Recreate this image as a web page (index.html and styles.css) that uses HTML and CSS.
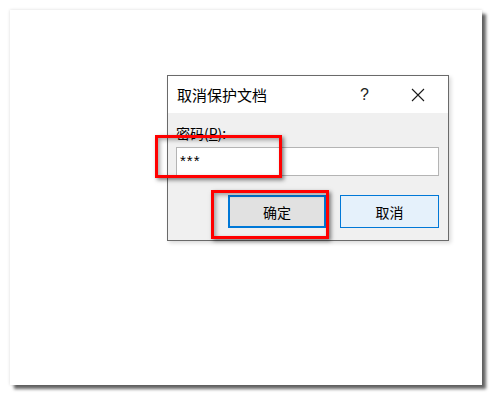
FILE: index.html
```html
<!DOCTYPE html>
<html lang="zh-CN">

<head>
  <meta charset="UTF-8">
  <title>取消保护文档</title>
  <link rel="stylesheet" href="styles.css">
</head>

<body>
  <div class="page">
    <!-- 对话框 -->
    <div class="dialog">
      <div class="dialog-title">
        <span class="title-text">取消保护文档</span>
        <span class="title-help">?</span>
        <span class="title-close">
          <svg width="14" height="14" viewBox="0 0 14 14">
            <path d="M1 1 L13 13 M13 1 L1 13" stroke="#1a1a1a" stroke-width="1.1" fill="none" />
          </svg>
        </span>
      </div>
      <div class="dialog-body">
        <div class="field-label">密码(<u>P</u>):</div>
        <div class="field-input">***</div>
        <div class="dialog-buttons">
          <div class="btn btn-default">确定</div>
          <div class="btn btn-hover">取消</div>
        </div>
      </div>
      <!-- 标注框 -->
      <div class="mark mark-input"></div>
      <div class="mark mark-ok"></div>
    </div>
  </div>
</body>

</html>
```

FILE: styles.css
```css
html,
body {
  height: 100%;
}

body {
  margin: 0;
  padding: 10px 0 0 10px;
  box-sizing: border-box;
  background-color: #fff;
  font-family: "Noto Sans CJK SC", "Liberation Sans", sans-serif;
}

.page {
  width: 472px;
  height: 375px;
  box-sizing: border-box;
  padding: 65px 0 0 157px;
  background-color: #fff;
  box-shadow: 0 0 3px rgba(0, 0, 0, 0.15), 4px 4px 3px rgba(0, 0, 0, 0.6);
}

.dialog {
  position: relative;
  width: 282px;
  height: 166px;
  box-sizing: border-box;
  border: 1px solid #6a6a6a;
  background-color: #f0f0f0;
  box-shadow: 2px 2px 4px rgba(0, 0, 0, 0.15);
}

.dialog-title {
  display: flex;
  align-items: center;
  height: 37px;
  padding-left: 9px;
  background-color: #fff;
  color: #000;
}

.title-text {
  flex: 1;
  font-size: 15px;
  line-height: 20px;
  padding-top: 1px;
}

.title-help {
  width: 14px;
  font-family: "Liberation Sans", sans-serif;
  font-size: 16px;
  color: #222;
  margin-right: 37px;
}

.title-close {
  display: flex;
  width: 14px;
  margin-right: 23px;
}

.dialog-body {
  padding: 0 9px 0 8px;
}

.field-label {
  margin-top: 10px;
  font-size: 14px;
  line-height: 20px;
  color: #000;
}

.field-input {
  margin-top: 4px;
  height: 29px;
  box-sizing: border-box;
  border: 1px solid #b4b4b4;
  background-color: #fff;
  padding: 3px 0 0 3px;
  font-family: "Liberation Sans", sans-serif;
  font-size: 15px;
  letter-spacing: 1px;
  line-height: 20px;
  color: #000;
}

.dialog-buttons {
  display: flex;
  justify-content: flex-end;
  gap: 14px;
  margin-top: 19px;
}

.btn {
  width: 99px;
  height: 33px;
  box-sizing: border-box;
  display: flex;
  justify-content: center;
  align-items: center;
  font-size: 14px;
  color: #000;
}

.btn-default {
  width: 98px;
  border: 2px solid #0078d7;
  background-color: #e1e1e1;
}

.btn-hover {
  border: 1px solid #0078d7;
  background-color: #e5f1fb;
}

/* 红色标注框 */
.mark {
  position: absolute;
  box-sizing: border-box;
  border: 3px solid #ff0000;
  box-shadow: 2px 2px 4px rgba(0, 0, 0, 0.5), inset 2px 2px 4px rgba(0, 0, 0, 0.35);
}

.mark-input {
  left: -13px;
  top: 59px;
  width: 127px;
  height: 43px;
}

.mark-ok {
  left: 43px;
  top: 114px;
  width: 118px;
  height: 49px;
}
```
